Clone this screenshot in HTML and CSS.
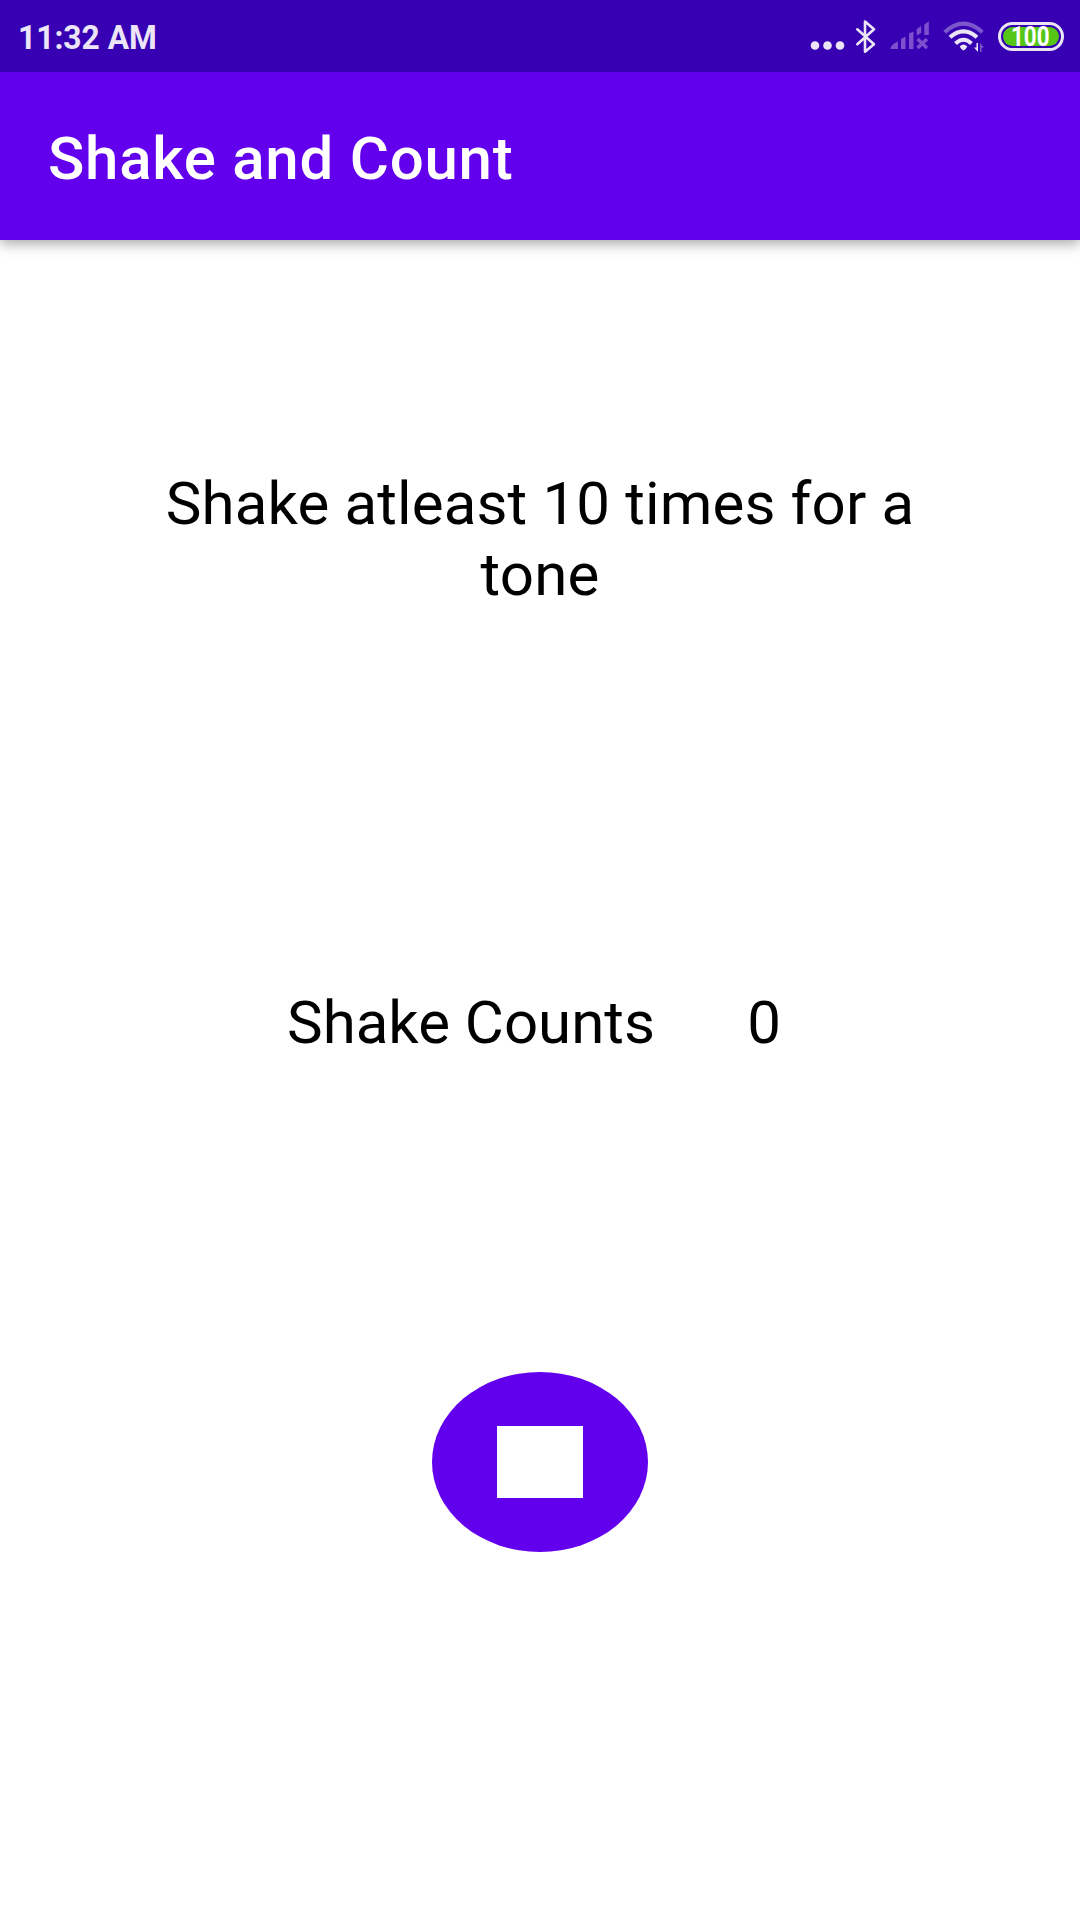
FILE: index.html
```html
<!DOCTYPE html>
<html lang="en">
<head>
<meta charset="utf-8">
<title>Shake and Count</title>
<link rel="stylesheet" href="styles.css">
</head>
<body>
<header class="status-bar">
  <span class="clock">11:32 AM</span>
  <div class="status-icons">
    <svg class="icon" width="40" height="72" viewBox="808 0 40 72"><circle cx="815" cy="45.5" r="4.3"/><circle cx="827.5" cy="45.5" r="4.3"/><circle cx="840" cy="45.5" r="4.3"/></svg>
    <svg class="icon line" width="36" height="72" viewBox="848 0 36 72"><path d="M857.3 29.3L874 44.2L865 51.7V21.5L874 29.3L857.3 44.2"/></svg>
    <svg class="icon dim" width="52" height="72" viewBox="884 0 52 72"><path d="M890.5 49C890.5 46 894 43 898 41.500V49ZM901 39L905.500 36.500V49H901ZM909 33.500L913.500 31.500V49H909ZM916.700 29L921.200 26V33L916.700 35.500ZM924.300 24.500L928.800 21.500V35H924.300Z"/><path class="cross" d="M917.500 39L927 48M927 39L917.500 48"/></svg>
    <svg class="icon wifi" width="56" height="72" viewBox="936 0 56 72"><path class="faint" d="M944.700 32.200Q963.500 15.200 982.300 32.200"/><path d="M950 37.200Q963.500 25.400 977 37.200"/><path d="M955.500 43.500Q963.500 36 971.500 43.500"/><path class="solid" d="M959.700 46.500Q963.500 42.500 967.300 46.500Q966 49.500 963.500 50.500Q961 49.500 959.700 46.500Z"/><path class="solid" d="M976.500 43H978V52L974 47.500H976.500Z"/><path class="solid faint" d="M980 43L984 47.500H981.500V52H980Z"/></svg>
    <div class="battery"><div class="charge"><span class="level">100</span></div></div>
  </div>
</header>
<div class="app-bar"><h1 class="title">Shake and Count</h1></div>
<main class="content">
  <p class="hint">Shake atleast 10 times for a tone</p>
  <div class="counter"><span>Shake Counts</span><span>0</span></div>
  <button class="stop" aria-label="Stop"><span class="stop-mark"></span></button>
</main>
</body>
</html>
```
FILE: styles.css
```css
* {
  box-sizing: border-box;
}

body {
  margin: 0;
  height: 1920px;
  display: flex;
  flex-direction: column;
  background: #fff;
  color: #000;
  font-family: Roboto, sans-serif;
}

.status-bar {
  height: 72px;
  flex: none;
  display: flex;
  justify-content: space-between;
  padding: 0 16px 0 18px;
  background: #3700b3;
  color: #ebe5f7;
}

.clock {
  padding-top: 1px;
  font-size: 33px;
  font-weight: 700;
  line-height: 73px;
  transform: scaleX(.962);
  transform-origin: left;
}

.status-icons {
  display: flex;
}

.icon {
  display: block;
  fill: #ebe5f7;
}

.line {
  fill: none;
  stroke: #ebe5f7;
  stroke-width: 2.6;
  stroke-linecap: round;
  stroke-linejoin: round;
}

.dim {
  fill: #7d50cf;
}

.cross {
  stroke: #7d50cf;
  stroke-width: 3.5;
}

.wifi path {
  fill: none;
  stroke: #ebe5f7;
  stroke-width: 4;
}

.wifi .solid {
  fill: #ebe5f7;
  stroke: none;
}

.wifi .faint {
  opacity: .38;
}

.battery {
  width: 66px;
  height: 29px;
  margin: 22px 0 0 6px;
  padding: 2px;
  border: 3px solid #ebe5f7;
  border-radius: 15px;
}

.charge {
  height: 19px;
  display: flex;
  align-items: center;
  justify-content: center;
  border-radius: 10px;
  background: #55c516;
}

.level {
  color: #fff;
  font-size: 27px;
  font-weight: 700;
  line-height: 19px;
  transform: translate(-1px, .5px) scaleX(.83);
}

.app-bar {
  height: 168px;
  flex: none;
  display: flex;
  align-items: center;
  padding: 6px 48px 0;
  background: #6200ee;
  box-shadow: 0 4px 12px rgba(0, 0, 0, .34);
  clip-path: inset(0 0 -24px 0);
}

.title {
  margin: 0;
  color: #fff;
  font-size: 60px;
  font-weight: 500;
  line-height: 70px;
  letter-spacing: .75px;
}

.content {
  display: flex;
  flex-direction: column;
  align-items: center;
  font-size: 60px;
  line-height: 71px;
}

.hint {
  width: 780px;
  margin: 228px 0 0;
  text-align: center;
  letter-spacing: .15px;
}

.counter {
  width: 494px;
  margin: 377px 12px 0 0;
  display: flex;
  justify-content: space-between;
}

.stop {
  width: 216px;
  height: 180px;
  margin: 314px 0 0;
  padding: 0;
  display: flex;
  align-items: center;
  justify-content: center;
  border: 0;
  border-radius: 50%;
  background: #6200ee;
}

.stop-mark {
  width: 86px;
  height: 72px;
  background: #fff;
}
```
